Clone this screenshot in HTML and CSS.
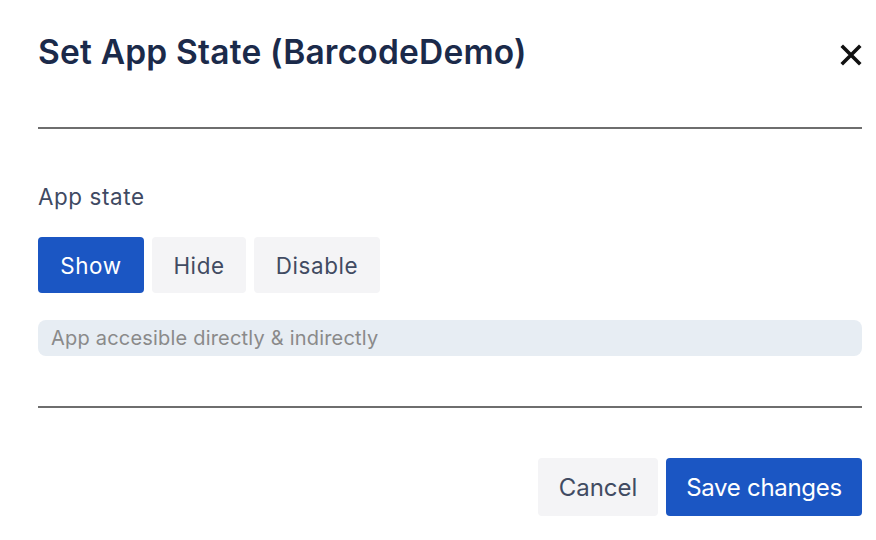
FILE: index.html
```html
<!DOCTYPE html>
<html>
<head>
<meta charset="utf-8">
<link rel="stylesheet" href="styles.css">
</head>
<body>
<div class="modal">
  <header class="modal-header">
    <h1 class="title">Set App State (BarcodeDemo)</h1>
    <button class="close" aria-label="Close">
      <svg width="22" height="22" viewBox="0 0 22 22"><path d="M3 3 L19 19 M19 3 L3 19" stroke="#111" stroke-width="3.6" stroke-linecap="square" fill="none"/></svg>
    </button>
  </header>
  <hr class="divider">
  <section class="modal-body">
    <div class="label">App state</div>
    <div class="seg">
      <button class="btn btn-primary btn-show">Show</button>
      <button class="btn btn-light btn-hide">Hide</button>
      <button class="btn btn-light btn-disable">Disable</button>
    </div>
    <div class="help">App accesible directly &amp; indirectly</div>
  </section>
  <hr class="divider">
  <footer class="modal-footer">
    <button class="btn btn-light btn-cancel">Cancel</button>
    <button class="btn btn-primary btn-save">Save changes</button>
  </footer>
</div>
</body>
</html>
```
FILE: styles.css
```css
* { box-sizing: border-box; }
html, body { margin: 0; padding: 0; background: #fff; }
body { font-family: "Inter", "Noto Sans", sans-serif; }
.modal { padding: 0 14px 0 38px; width: 876px; }
.modal-header { display: flex; align-items: flex-start; justify-content: space-between; height: 127px; padding-top: 32px; }
.title { margin: 0; font-size: 33.5px; line-height: 40px; font-weight: 600; color: #1b2a4a; letter-spacing: 0.2px; }
.close { border: 0; background: none; padding: 0; margin-top: 12px; width: 22px; height: 22px; display: flex; }
.divider { border: 0; height: 2px; background: #6e6e6e; margin: 0; width: 824px; }
.modal-body { padding: 52px 0 50px; }
.label { font-size: 22.4px; color: #3f4a63; line-height: 32px; margin-bottom: 24px; letter-spacing: 0.6px; }
.seg { display: flex; gap: 8px; }
.btn { font-family: inherit; border: 0; border-radius: 4px; font-size: 22.4px; cursor: pointer; }
.btn-primary { background: #1b56c3; color: #fff; }
.btn-light { background: #f4f4f6; color: #414b62; }
.seg .btn { height: 56px; padding: 0; letter-spacing: 0.6px; }
.btn-show { width: 106px; }
.btn-hide { width: 94px; }
.btn-disable { width: 126px; }
.help { margin-top: 27px; height: 36px; background: #e7edf3; border-radius: 8px; width: 824px; color: #8a8a8a; font-size: 20px; line-height: 36px; padding-left: 13px; letter-spacing: 0.2px; }
.modal-footer { display: flex; justify-content: flex-end; gap: 8px; padding-top: 50px; width: 824px; }
.modal-footer .btn { height: 58px; font-size: 24px; }
.btn-cancel { width: 120px; }
.btn-save { width: 196px; letter-spacing: -0.3px; }
```
